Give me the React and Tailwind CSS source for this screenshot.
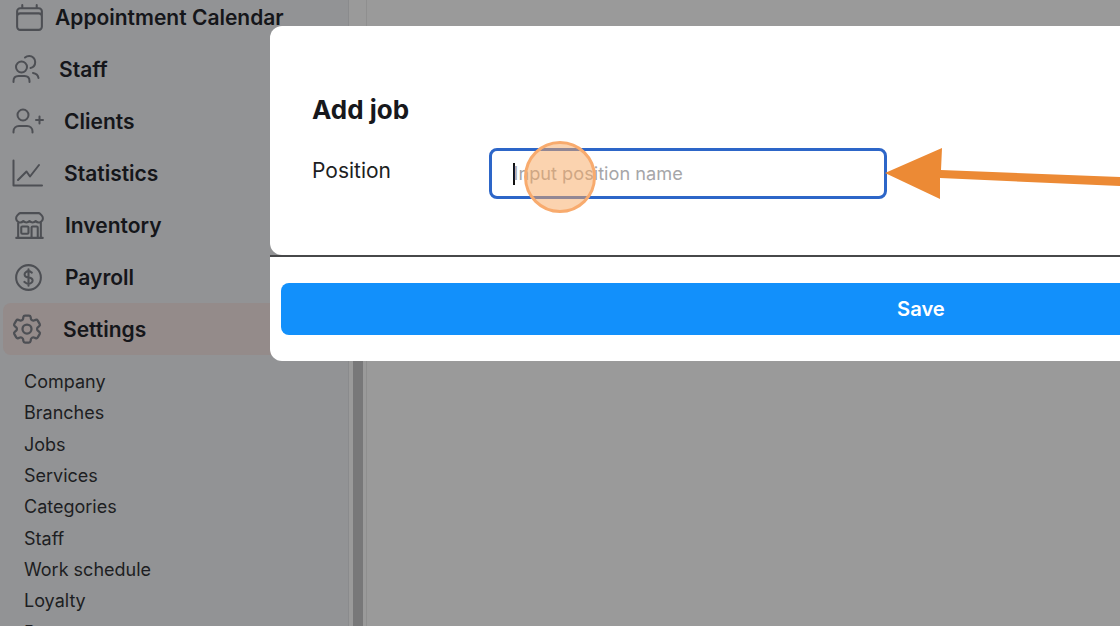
import { HiOutlineBuildingStorefront, HiOutlineCalendar, HiOutlineCog6Tooth, HiOutlineCurrencyDollar } from "react-icons/hi2";

const FONT = "font-['Inter','Liberation_Sans',sans-serif]";

const StaffIcon = () => (
  <svg className="shrink-0" width="28" height="30" viewBox="0 0 28 30" fill="none" stroke="currentColor" strokeWidth="2" strokeLinecap="round" strokeLinejoin="round">
    <circle cx="9.500" cy="13" r="5.500" />
    <path d="M1.500 28v-1c0-3 2-5 5-5h6c3 0 5 2 5 5v1" />
    <path d="M13 3.500c1.200-1 2.600-1.500 4.200-1.500 3.300 0 6 2.600 6 6 0 3-2 5.400-4.700 6" />
    <path d="M21 19c2.800.4 5 2.500 5.500 5" />
  </svg>
);

const ClientsIcon = () => (
  <svg className="shrink-0" width="32" height="26" viewBox="0 0 32 26" fill="none" stroke="currentColor" strokeWidth="2" strokeLinecap="round" strokeLinejoin="round">
    <circle cx="11" cy="7" r="5.500" />
    <path d="M1.500 24.500v-1c0-3.300 2.500-5.500 5.500-5.500h8c3 0 5.500 2.200 5.500 5.500v1" />
    <path d="M24 12h7M27.500 8.500v7" />
  </svg>
);

const StatisticsIcon = () => (
  <svg className="shrink-0" width="32" height="28" viewBox="0 0 32 28" fill="none" stroke="currentColor" strokeWidth="2" strokeLinecap="round" strokeLinejoin="round">
    <path d="M1.500 1.500v25h28.500" />
    <path d="M6 21l8.500-8.500 3.500 5L27 6" />
  </svg>
);

const NAV_ITEMS = [
  { label: "Staff", icon: <StaffIcon />, iconBox: "ml-[11px]", gap: "ml-[18px]" },
  { label: "Clients", icon: <ClientsIcon />, iconBox: "ml-[13px]", gap: "ml-[21px]" },
  { label: "Statistics", icon: <StatisticsIcon />, iconBox: "ml-[13px]", gap: "ml-[21px]" },
  { label: "Inventory", icon: <HiOutlineBuildingStorefront className="shrink-0" size={33} />, iconBox: "ml-[14px]", gap: "ml-[21px]" },
  { label: "Payroll", icon: <HiOutlineCurrencyDollar className="shrink-0" size={33} />, iconBox: "ml-[13px]", gap: "ml-[22px]" },
];

const SUB_ITEMS = ["Company", "Branches", "Jobs", "Services", "Categories", "Staff", "Work schedule", "Loyalty", "Payment account"];

const NavRow = ({ item }) => (
  <div className="flex h-[52px] shrink-0 items-center">
    <div className={`flex w-[30px] justify-center text-[#4d4f54] ${item.iconBox}`}>{item.icon}</div>
    <span className={`pt-[2px] text-[21px] font-semibold text-[#15161a] ${item.gap}`}>{item.label}</span>
  </div>
);

export default function App() {
  return (
    <div className={`relative flex h-[626px] w-[1120px] overflow-hidden bg-[#9a9a9a] ${FONT}`}>
      <aside className="flex h-full w-[349px] shrink-0 flex-col overflow-hidden border-r border-[#8a8b8d] bg-[#929395]">
        <div className="mt-[-9px] flex h-[52px] shrink-0 items-center">
          <div className="ml-[14px] flex w-[30px] justify-center text-[#4d4f54]">
            <HiOutlineCalendar className="shrink-0" size={33} />
          </div>
          <span className="ml-[11px] whitespace-nowrap pt-[2px] text-[21px] font-semibold text-[#15161a]">Appointment Calendar</span>
        </div>
        {NAV_ITEMS.map((item) => (
          <NavRow key={item.label} item={item} />
        ))}
        <div className="ml-[3px] flex h-[52px] shrink-0 items-center rounded-[8px] bg-[#948b8a]">
          <div className="ml-[9px] flex w-[30px] justify-center text-[#4d4f54]">
            <HiOutlineCog6Tooth className="shrink-0" size={36} />
          </div>
          <span className="ml-[21px] pt-[2px] text-[21px] font-semibold text-[#15161a]">Settings</span>
        </div>
        <ul className="ml-[24px] mt-[10px] flex flex-col">
          {SUB_ITEMS.map((label, i) => (
            <li key={i} className="flex h-[31.300px] shrink-0 items-center whitespace-nowrap pt-[2px] text-[18px] text-[#1d1e22]">
              {label}
            </li>
          ))}
        </ul>
      </aside>
      <div className="ml-[4px] flex h-full w-[10px] shrink-0 flex-col pt-[100px]">
        <div className="flex-1 bg-[#787879]" />
      </div>
      <main className="ml-[3px] h-full flex-1 border-l border-[#8f8f8f]" />

      {/* modal sits over the dimmed page */}
      <div className="absolute left-[270px] top-[26px] w-[1300px]">
        <div className="h-[229px] rounded-[12px] bg-white px-[42px] pt-[66px]">
          <h2 className="text-[26px] font-bold leading-[36px] text-[#17181c]">Add job</h2>
          <div className="mt-[20px] flex items-center">
            <label className="mb-[5px] w-[177px] text-[21px] leading-[28px] text-[#1d1e22]">Position</label>
            <div className="flex h-[51px] w-[398px] items-center rounded-[8px] border-[3px] border-[#2d66c8] pl-[21px]">
              <span className="h-[22px] w-[1.500px] bg-[#111]" />
              <span className="-ml-[1px] text-[18.200px] text-[#a6a6a8]">Input position name</span>
            </div>
          </div>
        </div>
        <div className="h-[2px] bg-[#47484a]" />
        <div className="h-[104px] rounded-b-[12px] bg-white px-[11px] pt-[26px]">
          <button className="h-[52px] w-[1279px] rounded-[8px] bg-[#1290fb] text-left text-[20.200px] font-semibold text-white">
            <span className="ml-[616px]">Save</span>
          </button>
        </div>
      </div>

      {/* annotation: click marker */}
      <div className="absolute left-[524px] top-[141px] h-[72px] w-[72px] rounded-full border-[3px] border-[#f8ab6e] bg-[#f8a860]/50" />

      {/* annotation: arrow pointing at the input */}
      <svg className="absolute left-[880px] top-[140px]" width="240" height="70" viewBox="0 0 240 70">
        <polygon fill="#ec8a35" points="5,33 62,8 61,30 240,37 240,46 60,38 60,59" />
      </svg>
    </div>
  );
}
